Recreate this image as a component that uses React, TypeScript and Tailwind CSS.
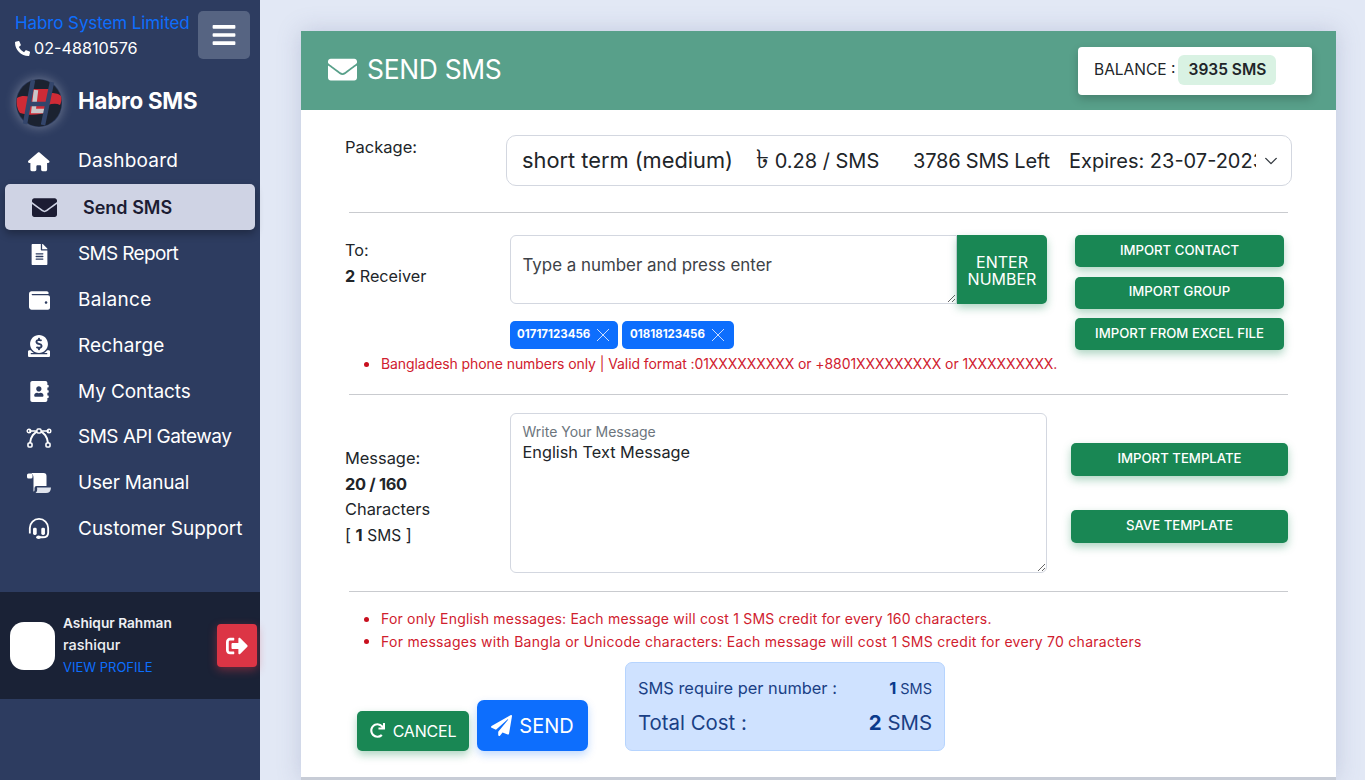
import React from "react";
import { FaBars, FaPhoneAlt, FaEnvelope, FaFileAlt, FaWallet, FaDonate, FaAddressBook, FaSignOutAlt, FaRedo, FaPaperPlane } from "react-icons/fa";
import { FaHouse } from "react-icons/fa6";

const font = { fontFamily: "Inter, 'Noto Sans', 'DejaVu Sans', sans-serif" };

function Logo() {
  return (
    <svg viewBox="0 0 46 48" className="w-[46px] h-[48px]">
      <ellipse cx="23" cy="24" rx="22.5" ry="23.5" fill="#1b2230" />
      <path d="M1 19 C6 16 10 17 14 18 L16 10 H33 L31 33 C24 36 14 37 4 34 C1 30 0 24 1 19 Z" fill="#cf2b36" />
      <path d="M34 14 C38 14 42 14 45 17 C46 20 45 24 44 26 C40 24 36 25 32 26 Z" fill="#cf2b36" />
      <path d="M20 11 L17.5 32 L30 32" stroke="#c9c6c8" strokeWidth="4.5" fill="none" />
      <path d="M17 1 L9 45 M36 3 L27 46 M11 25 H33" stroke="#33456b" strokeWidth="4.5" fill="none" />
    </svg>
  );
}

function BezierIcon() {
  return (
    <svg viewBox="0 0 26 20" className="w-[26px] h-[20px]" fill="none" stroke="currentColor">
      <path d="M3 3 H23" strokeWidth="1.5" />
      <path d="M13 3 C8 4 4.5 9 4 15 M13 3 C18 4 21.5 9 22 15" strokeWidth="2" />
      <circle cx="3" cy="3" r="1.8" strokeWidth="1.4" />
      <circle cx="23" cy="3" r="1.8" strokeWidth="1.4" />
      <rect x="11" y="1" width="4" height="4" rx="1" fill="#2d3c60" strokeWidth="1.4" />
      <rect x="2" y="15" width="4" height="4" rx="1" fill="#2d3c60" strokeWidth="1.6" />
      <rect x="20" y="15" width="4" height="4" rx="1" fill="#2d3c60" strokeWidth="1.6" />
    </svg>
  );
}

function ScrollIcon() {
  return (
    <svg viewBox="0 0 24 20" className="w-[24px] h-[20px]" fill="currentColor">
      <rect x="0" y="0.5" width="5.5" height="5" rx="1.6" />
      <path d="M4 0 H16.5 Q19.5 0 19.5 3 V13 H9.5 Q7.5 13 7.5 15 V17 Q7.5 18.5 6.5 18.5 V5.5 Q6.8 1.5 4 0 Z" />
      <path d="M10 14.5 H24 Q23.8 20 19 20 H8.5 Q10.8 18 10 14.5 Z" fill="#dfe3ec" />
    </svg>
  );
}

function HeadsetIcon() {
  return (
    <svg viewBox="0 0 24 24" className="w-[22px] h-[22px]" fill="currentColor" stroke="none">
      <path d="M2 17 V11 a10 10 0 0 1 20 0 V16 q0 5 -6 5 H12" fill="none" stroke="currentColor" strokeWidth="2" />
      <rect x="5.5" y="10.5" width="4" height="8" rx="1.6" />
      <rect x="14.5" y="10.5" width="4" height="8" rx="1.6" />
      <ellipse cx="11.5" cy="21" rx="2.6" ry="1.9" />
    </svg>
  );
}

const nav: { label: string; icon: React.ReactNode; track: string; row: string; active?: boolean }[] = [
  { label: "Dashboard", icon: <FaHouse size={21.5} />, track: "tracking-[0.25px]", row: "h-[45px]" },
  { label: "Send SMS", icon: <FaEnvelope size={25} className="translate-x-[5px]" />, track: "", row: "h-[46px] mb-[1.5px]", active: true },
  { label: "SMS Report", icon: <FaFileAlt size={21} />, track: "tracking-[-0.65px]", row: "h-[45.8px]" },
  { label: "Balance", icon: <FaWallet size={21} />, track: "tracking-[0.3px]", row: "h-[45.8px]" },
  { label: "Recharge", icon: <FaDonate size={22} />, track: "tracking-[0.15px]", row: "h-[45.8px]" },
  { label: "My Contacts", icon: <FaAddressBook size={21} />, track: "tracking-[-0.1px]", row: "h-[45.8px]" },
  { label: "SMS API Gateway", icon: <BezierIcon />, track: "tracking-[-0.5px]", row: "h-[45.8px]" },
  { label: "User Manual", icon: <ScrollIcon />, track: "tracking-[-0.2px]", row: "h-[45.8px]" },
  { label: "Customer Support", icon: <HeadsetIcon />, track: "tracking-[0px]", row: "h-[45.8px]" },
];

function Sidebar() {
  return (
    <aside className="w-[260px] h-[780px] shrink-0 bg-[#2d3c60] flex flex-col">
      <div className="flex justify-between pl-[15px] pr-[10px] pt-[11px]">
        <div>
          <div className="text-[#0d6efd] text-[17px] leading-[24px] tracking-[-0.1px] whitespace-nowrap">Habro System Limited</div>
          <div className="flex items-center gap-[4px] text-white text-[16.2px] leading-[24px] mt-[1px]">
            <FaPhoneAlt size={15} />
            <span>02-48810576</span>
          </div>
        </div>
        <div className="w-[52px] h-[48px] rounded-[5px] bg-[#566482] flex items-center justify-center text-white">
          <FaBars size={26} />
        </div>
      </div>
      <div className="flex items-center gap-[16px] pl-[16px] mt-[18px] h-[50px]">
        <div className="w-[46px] h-[48px] rounded-full shadow-[0_0_12px_rgba(255,255,255,0.35)]">
          <Logo />
        </div>
        <span className="text-white font-bold text-[22.3px] tracking-[-0.2px] pb-[4px]">Habro SMS</span>
      </div>
      <nav className="mt-[11px] px-[5px] flex flex-col">
        {nav.map(({ label, icon, track, row, active }) => (
          <div
            key={label}
            className={
              row + " flex items-center " + (active
                ? "rounded-[5px] bg-[#cfd3e4] text-[#1c1c33] font-semibold shadow-[0_4px_8px_rgba(0,0,0,0.3)]"
                : "text-white")
            }
          >
            <span className="w-[68px] flex justify-center shrink-0">{icon}</span>
            <span className={active ? "pl-[10px] text-[18px]" : "pl-[5px] text-[19px] whitespace-nowrap " + track}>{label}</span>
          </div>
        ))}
      </nav>
      <div className="mt-[40px] h-[107px] bg-[#1a2236] flex items-center pl-[10px] pr-[3px]">
        <div className="w-[45px] h-[48px] rounded-[14px] bg-white shrink-0" />
        <div className="ml-[8px] flex-1 text-[14.5px] leading-[22px] text-[#eef0f3] pb-[2px]">
          <div className="font-semibold text-[13.7px] whitespace-nowrap">Ashiqur Rahman</div>
          <div className="font-medium">rashiqur</div>
          <div className="text-[#0d6efd] text-[13px]">VIEW PROFILE</div>
        </div>
        <div className="w-[40px] h-[43px] rounded-[4px] bg-[#dc3545] shadow-[0_3px_10px_rgba(220,53,69,0.45)] flex items-center justify-center text-white">
          <FaSignOutAlt size={22} />
        </div>
      </div>
    </aside>
  );
}

const greenBtn =
  "bg-[#198754] text-white rounded-[5px] flex items-center justify-center font-medium shadow-[0_4px_8px_rgba(25,135,84,0.35)]";

function Note({ children, track }: { children: React.ReactNode; track: string }) {
  return (
    <div className={"flex items-center text-[#d0202e] text-[14px] leading-[22.5px] whitespace-nowrap " + track}>
      <span className="w-[5px] h-[5px] rounded-full bg-[#c80f1e] ml-[19px] mr-[12px] shrink-0" />
      {children}
    </div>
  );
}

function Card() {
  return (
    <section className="bg-white h-[749px] border-b-[3px] border-[#c7ccd6] shadow-[0_0_22px_rgba(120,130,170,0.3)]">
      <header className="h-[79px] bg-[#58a08a] flex items-center justify-between pl-[27px] pr-[24px]">
        <div className="flex items-center gap-[10px] text-white text-[26.4px] tracking-[-0.3px] pb-[1px]">
          <FaEnvelope size={29} />
          <span>SEND SMS</span>
        </div>
        <div className="w-[234px] h-[48px] bg-white rounded-[4px] flex items-center pl-[16px] pb-[1px] shadow-[0_4px_10px_rgba(0,0,0,0.2)] text-[#212529]">
          <span className="text-[15.5px]">BALANCE :</span>
          <span className="ml-[3px] h-[30px] w-[98px] bg-[#d9f2e3] rounded-[6px] flex items-center justify-center font-semibold text-[15.5px]">3935 SMS</span>
        </div>
      </header>
      <div className="px-[44px] pt-[25px] text-[#212529]">
        <div className="flex">
          <div className="w-[161px] text-[16.5px] leading-[24px]">Package:</div>
          <div className="flex-1 h-[51px] border border-[#d3d7e0] rounded-[10px] flex items-center pl-[15px] text-[20px]">
            <div className="w-[734px] overflow-hidden whitespace-nowrap flex items-center h-[32px]">
              <span className="w-[234px] shrink-0 text-[21.8px]">short term (medium)</span>
              <span className="w-[157px] shrink-0"><span className="text-[26px] leading-none font-light">৳</span> 0.28 / SMS</span>
              <span className="w-[156px] shrink-0 tracking-[-0.2px]">3786 SMS Left</span>
              <span className="shrink-0">Expires: 23-07-2023</span>
            </div>
            <svg viewBox="0 0 16 16" className="w-[14px] h-[14px] ml-[8px]" fill="none" stroke="#343a40" strokeWidth="1.6" strokeLinecap="round" strokeLinejoin="round"><path d="M2 5l6 6 6-6" /></svg>
          </div>
        </div>
        <hr className="mx-[4px] mt-[26px] border-[#c9cbcf]" />
        <div className="flex mt-[22px]">
          <div className="w-[165px] text-[16.2px] leading-[26px] pt-[2px]">
            <div>To:</div>
            <div><b>2</b> Receiver</div>
          </div>
          <div className="w-[537px]">
            <div className="flex">
              <textarea
                readOnly
                placeholder="Type a number and press enter"
                className="w-[447px] h-[69px] border border-[#d3d7e0] rounded-l-[6px] px-[11.5px] py-[17px] text-[16.9px] leading-[24px] placeholder:text-[#3d4247] outline-none"
              />
              <div className={greenBtn + " rounded-l-none w-[90px] h-[69px] pt-[3px] text-[16px] leading-[17px] text-center !font-normal"}>ENTER<br />NUMBER</div>
            </div>
            <div className="flex gap-[4px] mt-[17px]">
              {["01717123456", "01818123456"].map((n, i) => (
                <div key={n} className={(i ? "w-[112px] pl-[8px]" : "w-[108px] pl-[7px]") + " h-[28px] rounded-[5px] bg-[#0d6efd] text-white flex items-center gap-[6px] text-[11.5px] font-bold"}>
                  <span>{n}</span>
                  <svg viewBox="0 0 14 14" className="w-[14px] h-[14px]" stroke="#c8dcff" strokeWidth="1" fill="none"><path d="M1 1l12 12M13 1L1 13" /></svg>
                </div>
              ))}
            </div>
          </div>
          <div className="w-[209px] ml-[28px] flex flex-col gap-[9.5px] text-[13.2px]">
            <div className={greenBtn + " h-[32px] pb-[1px]"}>IMPORT CONTACT</div>
            <div className={greenBtn + " h-[32px] pb-[1px]"}>IMPORT GROUP</div>
            <div className={greenBtn + " h-[32px] pb-[1px]"}>IMPORT FROM EXCEL FILE</div>
          </div>
        </div>
        <div className="mt-[3px]">
          <Note track="tracking-[-0.08px]">Bangladesh phone numbers only | Valid format :01XXXXXXXXX or +8801XXXXXXXXX or 1XXXXXXXXX.</Note>
        </div>
        <hr className="mx-[4px] mt-[18.5px] border-[#c9cbcf]" />
        <div className="flex mt-[18px]">
          <div className="w-[165px] text-[16.4px] leading-[25.5px] pt-[33px]">
            <div>Message:</div>
            <div className="font-bold tracking-[-0.3px]">20 / 160</div>
            <div>Characters</div>
            <div>[ <b>1</b> <span className="text-[15.5px]">SMS</span> ]</div>
          </div>
          <div className="relative w-[537px]">
            <span className="absolute left-[12.5px] top-[9px] text-[14px] leading-[20px] text-[#6c757d]">Write Your Message</span>
            <textarea
              readOnly
              value="English Text Message"
              className="block w-[537px] h-[160px] border border-[#d3d7e0] rounded-[6px] px-[11.5px] pt-[26px] text-[16.3px] leading-[24px] text-[#212529] outline-none"
            />
          </div>
          <div className="w-[217px] ml-[24px] pt-[30px] flex flex-col gap-[34px] text-[13.2px]">
            <div className={greenBtn + " h-[33px] pb-[2px]"}>IMPORT TEMPLATE</div>
            <div className={greenBtn + " h-[33px] pb-[2px]"}>SAVE TEMPLATE</div>
          </div>
        </div>
        <hr className="mx-[4px] mt-[18px] border-[#c9cbcf]" />
        <div className="mt-[16px]">
          <Note track="tracking-[0.2px]">For only English messages: Each message will cost 1 SMS credit for every 160 characters.</Note>
          <Note track="tracking-[0.28px]">For messages with Bangla or Unicode characters: Each message will cost 1 SMS credit for every 70 characters</Note>
        </div>
        <div className="flex items-end mt-[9px] ml-[12px]">
          <div className={greenBtn + " w-[112px] h-[40px] gap-[8px] text-[16px] pb-[1px] !font-normal"}>
            <FaRedo size={15} />
            <span className="tracking-[-0.2px]">CANCEL</span>
          </div>
          <div className="ml-[8px] w-[111px] h-[51px] rounded-[7px] bg-[#0d6efd] text-white flex items-center justify-center gap-[7px] text-[20px] shadow-[0_4px_8px_rgba(13,110,253,0.25)]">
            <FaPaperPlane size={21} />
            <span>SEND</span>
          </div>
          <div className="ml-[37px] w-[320px] h-[89px] rounded-[7px] bg-[#cfe2ff] border border-[#b6d4fe] text-[#1a3f85] px-[12px] pt-[13px]">
            <div className="flex justify-between text-[16.4px] leading-[24px]">
              <span>SMS require per number :</span>
              <span className="flex items-baseline gap-[4px]"><b className="text-[#0a3a8c]">1</b><span className="text-[14.5px]">SMS</span></span>
            </div>
            <div className="flex justify-between text-[20.4px] leading-[30px] mt-[7px]">
              <span>Total Cost :</span>
              <span><b className="text-[#0a3a8c]">2</b> SMS</span>
            </div>
          </div>
        </div>
      </div>
    </section>
  );
}

export default function App() {
  return (
    <div style={font} className="w-[1365px] h-[780px] overflow-hidden flex bg-[#e2e8f5]">
      <Sidebar />
      <main className="flex-1 pl-[41px] pr-[29px] pt-[31px]">
        <Card />
      </main>
    </div>
  );
}
